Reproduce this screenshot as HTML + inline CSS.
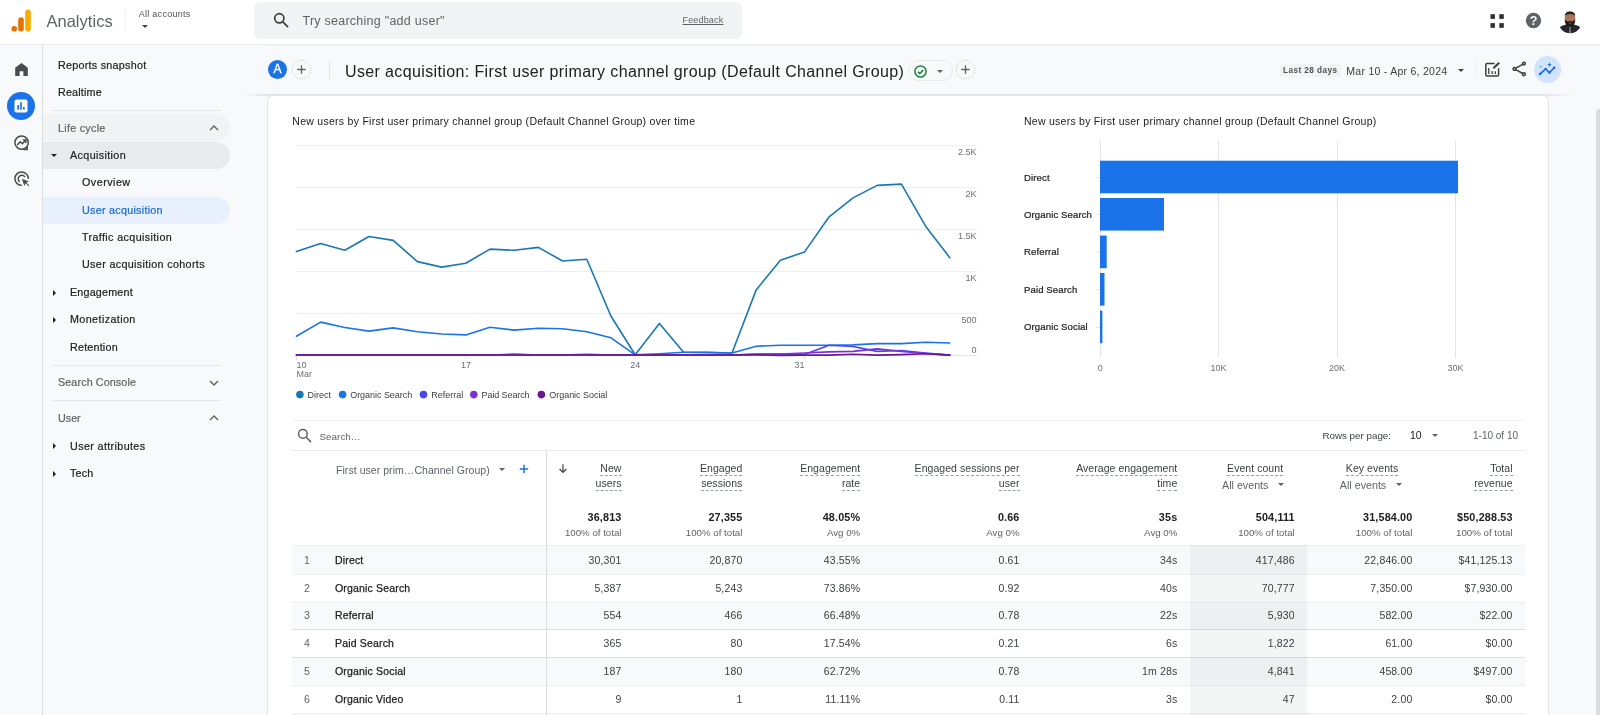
<!DOCTYPE html>
<html lang="en">
<head>
<meta charset="utf-8">
<title>Analytics - User acquisition</title>
<style>
*{box-sizing:border-box;margin:0;padding:0}
html,body{width:1600px;height:715px;overflow:hidden}
body{background:#f8f9fa;font-family:"Liberation Sans",sans-serif;color:#202124;position:relative;font-size:11px}
#root{position:absolute;left:0;top:0;width:1600px;height:715px;overflow:hidden;will-change:transform}
.abs{position:absolute;white-space:nowrap}
#topbar{position:absolute;left:0;top:0;width:1600px;height:44px;background:#fff;box-shadow:0 1px 0 #ebedf0,0 2px 1px rgba(235,237,240,.5)}
#rail{position:absolute;left:0;top:45px;width:43px;height:670px;border-right:1px solid #dadce0;background:#f8f9fa}
#nav{position:absolute;left:43px;top:45px;width:225px;height:670px;background:#f8f9fa}
.nv{position:absolute;white-space:nowrap;font-size:10.75px;color:#202124;letter-spacing:.1px;line-height:14px;-webkit-text-stroke:.2px currentColor}
.nvh{color:#5f6368}
.pill{position:absolute;left:0;width:187px;height:27px;border-radius:0 14px 14px 0}
.hr{position:absolute;left:9px;width:169px;height:1px;background:#e3e5e8}
.tri{position:absolute;width:0;height:0}
#search{position:absolute;left:254px;top:2px;width:488px;height:37px;border-radius:6px;background:#f1f3f4}
#card{position:absolute;left:268px;top:96px;width:1280px;height:640px;background:#fff;border-radius:5px;box-shadow:0 0 0 1px #e1e3e6}
.ln{position:absolute;height:1px;background:#e8eaed}
.rw{position:absolute;left:292px;width:1233px}
.th{font-size:10.5px;line-height:14px;color:#3c4043;letter-spacing:.05px}
.th span{border-bottom:1px dashed #9aa0a6;display:inline-block;line-height:13px}
.r{text-align:right}
.tt{font-size:10.8px;line-height:13px;font-weight:bold;color:#202124;letter-spacing:.15px}
.ts{font-size:9.7px;line-height:12px;color:#5f6368}
.td{font-size:10.5px;line-height:13px;color:#3c4043;letter-spacing:.15px}
.nm{color:#202124;letter-spacing:.17px;-webkit-text-stroke:.25px #202124}
</style>
</head>
<body>
<div id="root">

<!-- ============ TOP BAR ============ -->
<div id="topbar">
  <svg class="abs" style="left:11px;top:9px" width="21" height="23" viewBox="0 0 21 23">
    <rect x="14.2" y="0.5" width="5.6" height="22" rx="2.8" fill="#f9ab00"/>
    <rect x="7.2" y="8.2" width="5.6" height="14.3" rx="2.8" fill="#e37400"/>
    <circle cx="3.2" cy="19.7" r="2.8" fill="#e37400"/>
  </svg>
  <div class="abs" style="left:46.4px;top:11px;font-size:16.5px;color:#5f6368;letter-spacing:.04px;line-height:20px">Analytics</div>
  <div class="abs" style="left:125px;top:9px;width:1px;height:24px;background:#f1f3f4"></div>
  <div class="abs" style="left:138.7px;top:8.7px;font-size:9px;color:#4d5156;letter-spacing:.28px;line-height:11px">All accounts</div>
  <div class="tri" style="left:142px;top:25px;border-left:3.5px solid transparent;border-right:3.5px solid transparent;border-top:3.5px solid #3c4043"></div>

  <div id="search">
    <svg class="abs" style="left:19px;top:10.3px" width="16" height="16" viewBox="0 0 16 16" fill="none" stroke="#3c4043" stroke-width="1.7"><circle cx="6.3" cy="6.3" r="4.6"/><path d="M9.8 9.8 L14.6 14.6" stroke-linecap="round"/></svg>
    <div class="abs" style="left:48.5px;top:11.7px;font-size:12.5px;color:#5f6368;line-height:15px;letter-spacing:.25px">Try searching "add user"</div>
    <div class="abs" style="left:428.5px;top:12.8px;font-size:9px;color:#5f6368;line-height:11px;text-decoration:underline;letter-spacing:.17px">Feedback</div>
  </div>

  <!-- apps grid -->
  <svg class="abs" style="left:1488.9px;top:12.8px" width="16" height="16" viewBox="0 0 16 16" fill="#303134"><rect x="1.45" y="1.2" width="4.5" height="4.7"/><rect x="10.3" y="1.2" width="4.5" height="4.7"/><rect x="1.45" y="10.1" width="4.5" height="4.7"/><rect x="10.3" y="10.1" width="4.5" height="4.7"/></svg>
  <!-- help -->
  <svg class="abs" style="left:1524.5px;top:11.8px" width="17" height="17" viewBox="0 0 17 17"><circle cx="8.5" cy="8.5" r="7.7" fill="#5f6368"/><text x="8.5" y="13" font-family="Liberation Sans, sans-serif" font-weight="bold" font-size="12.5" fill="#fff" text-anchor="middle">?</text></svg>
  <!-- avatar -->
  <svg class="abs" style="left:1557.6px;top:9.5px" width="24" height="24" viewBox="0 0 24 24">
    <defs><clipPath id="avc"><circle cx="12" cy="12" r="11.3"/></clipPath></defs>
    <g clip-path="url(#avc)">
      <rect width="24" height="24" fill="#ffffff"/>
      <path d="M0 24 L0 18.5 Q3 15.4 8 14.6 L16 14.6 Q21 15.4 24 18.5 L24 24 Z" fill="#24262a"/>
      <path d="M11.6 16.5 L12.4 16.5 L12.8 24 L11.2 24 Z" fill="#9a9da3"/>
      <ellipse cx="12" cy="8.8" rx="5.3" ry="7.2" fill="#a8755a"/>
      <path d="M6.7 9.6 Q6.9 16.4 12 16.6 Q17.1 16.4 17.3 9.6 Q15.6 11.6 14.2 11.4 Q12 10.6 9.8 11.4 Q8.4 11.6 6.7 9.6Z" fill="#1d1715"/>
      <path d="M6.7 6.6 Q6.8 1.5 12 1.5 Q17.2 1.5 17.3 6.6 Q16.4 4 12 3.9 Q7.6 4 6.7 6.6Z" fill="#2a201d"/>
      <path d="M10.6 12.9 Q12 13.5 13.4 12.9" stroke="#b07a6a" stroke-width=".7" fill="none"/>
    </g>
  </svg>
</div>

<!-- ============ LEFT ICON RAIL ============ -->
<div id="rail">
  <!-- home -->
  <svg class="abs" style="left:14.3px;top:17px" width="15" height="15" viewBox="0 0 15 15"><path d="M7.5 1 L1.2 5.8 V14 H5.6 V9.3 H9.4 V14 H13.8 V5.8 Z" fill="#474a4e"/></svg>
  <!-- reports (active) -->
  <div class="abs" style="left:7px;top:47px;width:28px;height:28px;border-radius:50%;background:#1a73e8"></div>
  <svg class="abs" style="left:14px;top:54px" width="14" height="14" viewBox="0 0 14 14"><rect x="0.5" y="0.5" width="13" height="13" rx="2" fill="#fff"/><rect x="3.3" y="6" width="1.7" height="4.6" fill="#1a73e8"/><rect x="6.15" y="3.2" width="1.7" height="7.4" fill="#1a73e8"/><rect x="9" y="8" width="1.7" height="2.6" fill="#1a73e8"/></svg>
  <!-- explore -->
  <svg class="abs" style="left:13px;top:89px" width="18" height="18" viewBox="0 0 18 18" fill="none" stroke="#474a4e" stroke-width="1.5"><circle cx="8.6" cy="8.6" r="6.7"/><path d="M4.6 10.6 L7.3 7.7 L9.3 9.7 L12.6 6.2" stroke-linejoin="round" stroke-linecap="round"/><path d="M10.4 5.9 H12.9 V8.4" stroke-linejoin="round" stroke-linecap="round"/><path d="M14.2 12.4 V15.6 H11" stroke-linecap="round"/></svg>
  <!-- advertising -->
  <svg class="abs" style="left:12.6px;top:125.3px" width="18" height="18" viewBox="0 0 18 18" fill="none" stroke="#474a4e" stroke-width="1.5"><path d="M8.2 15.3 A6.7 6.7 0 1 1 15.3 8.2" stroke-linecap="round"/><path d="M6.2 11.4 A3.4 3.4 0 1 1 11.6 6.4" stroke-linecap="round"/><path d="M8.8 8.8 L16 11.4 L13.3 12.6 L16.3 15.6 L15.6 16.3 L12.6 13.3 L11.4 16 Z" fill="#474a4e" stroke="none"/></svg>
</div>

<!-- ============ LEFT NAV ============ -->
<div id="nav">
  <div class="nv" style="left:15px;top:12.5px;letter-spacing:0.26px">Reports snapshot</div>
  <div class="nv" style="left:15px;top:40.1px;letter-spacing:0.17px">Realtime</div>
  <div class="hr" style="top:65px"></div>
  <div class="pill" style="top:69px;background:#f1f3f4"></div>
  <div class="nv nvh" style="left:15px;top:76px;letter-spacing:0.28px">Life cycle</div>
  <svg class="abs" style="left:166.2px;top:79px" width="10" height="8" viewBox="0 0 10 8" fill="none" stroke="#5f6368" stroke-width="1.4"><path d="M1 6 L5 2 L9 6"/></svg>
  <div class="pill" style="top:97px;background:#e8eaed"></div>
  <div class="tri" style="left:8px;top:109px;border-left:3px solid transparent;border-right:3px solid transparent;border-top:3px solid #202124"></div>
  <div class="nv" style="left:27px;top:103.1px;letter-spacing:0.37px">Acquisition</div>
  <div class="nv" style="left:39px;top:130.1px;letter-spacing:0.47px">Overview</div>
  <div class="pill" style="top:152px;background:#e8f0fe"></div>
  <div class="nv" style="left:39px;top:157.85px;color:#1967d2;letter-spacing:0.27px">User acquisition</div>
  <div class="nv" style="left:39px;top:185.1px;letter-spacing:0.37px">Traffic acquisition</div>
  <div class="nv" style="left:39px;top:212.35px;letter-spacing:0.34px">User acquisition cohorts</div>
  <div class="tri" style="left:9.7px;top:244.5px;border-top:3px solid transparent;border-bottom:3px solid transparent;border-left:3px solid #202124"></div>
  <div class="nv" style="left:27px;top:240.1px;letter-spacing:0.19px">Engagement</div>
  <div class="tri" style="left:9.7px;top:271.5px;border-top:3px solid transparent;border-bottom:3px solid transparent;border-left:3px solid #202124"></div>
  <div class="nv" style="left:27px;top:267.35px;letter-spacing:0.40px">Monetization</div>
  <div class="nv" style="left:27px;top:294.9px;letter-spacing:0.20px">Retention</div>
  <div class="hr" style="top:320px"></div>
  <div class="nv nvh" style="left:15px;top:330.1px;letter-spacing:0.11px">Search Console</div>
  <svg class="abs" style="left:166px;top:334px" width="10" height="8" viewBox="0 0 10 8" fill="none" stroke="#5f6368" stroke-width="1.4"><path d="M1 2 L5 6 L9 2"/></svg>
  <div class="hr" style="top:355px"></div>
  <div class="nv nvh" style="left:15px;top:365.9px;letter-spacing:-0.00px">User</div>
  <svg class="abs" style="left:166px;top:369px" width="10" height="8" viewBox="0 0 10 8" fill="none" stroke="#5f6368" stroke-width="1.4"><path d="M1 6 L5 2 L9 6"/></svg>
  <div class="tri" style="left:9.7px;top:397.5px;border-top:3px solid transparent;border-bottom:3px solid transparent;border-left:3px solid #202124"></div>
  <div class="nv" style="left:27px;top:393.6px;letter-spacing:0.37px">User attributes</div>
  <div class="tri" style="left:9.7px;top:425.5px;border-top:3px solid transparent;border-bottom:3px solid transparent;border-left:3px solid #202124"></div>
  <div class="nv" style="left:27px;top:420.6px;letter-spacing:0.17px">Tech</div>
</div>

<div class="abs" style="left:1596px;top:109px;width:8px;height:620px;border-radius:4px;background:#dadce0"></div>

<!-- ============ HEADER ROW ============ -->
<div id="hdr">
  <div class="abs" style="left:268px;top:60px;width:19px;height:19px;border-radius:50%;background:#1a73e8;color:#fff;font-size:12px;-webkit-text-stroke:.35px #fff;text-align:center;line-height:19px">A</div>
  <svg class="abs" style="left:291px;top:59px" width="21" height="21" viewBox="0 0 21 21" fill="none"><circle cx="10.5" cy="10.5" r="9.2" stroke="#bdc1c6" stroke-width=".8" stroke-dasharray="1.3 1.3"/><path d="M10.5 6.3 V14.7 M6.3 10.5 H14.7" stroke="#5f6368" stroke-width="1.3"/></svg>
  <div class="abs" style="left:329px;top:61px;width:1px;height:18px;background:#e3e5e8"></div>
  <div class="abs" id="title" style="left:345px;top:62px;font-size:16px;line-height:20px;color:#202124;letter-spacing:.37px">User acquisition: First user primary channel group (Default Channel Group)</div>
  <div class="abs" style="left:908px;top:60px;width:45px;height:21px;border:1px solid #e6e8eb;border-radius:11px"></div>
  <svg class="abs" style="left:913px;top:64px" width="15" height="15" viewBox="0 0 15 15" fill="none" stroke="#188038" stroke-width="1.5"><circle cx="7.5" cy="7.5" r="5.6"/><path d="M4.9 7.7 L6.8 9.6 L10.3 5.9" stroke-linejoin="round"/></svg>
  <div class="tri" style="left:937px;top:70px;border-left:3.5px solid transparent;border-right:3.5px solid transparent;border-top:3.5px solid #5f6368"></div>
  <svg class="abs" style="left:955px;top:59px" width="21" height="21" viewBox="0 0 21 21" fill="none"><circle cx="10.5" cy="10.5" r="9.2" stroke="#bdc1c6" stroke-width=".8" stroke-dasharray="1.3 1.3"/><path d="M10.5 6.3 V14.7 M6.3 10.5 H14.7" stroke="#5f6368" stroke-width="1.3"/></svg>

  <div class="abs" style="left:1280px;top:64px;width:61px;height:13px;background:#f1f3f4;border-radius:2px"></div>
  <div class="abs" style="left:1283px;top:65px;font-size:8.2px;line-height:11px;font-weight:bold;color:#4d5156;letter-spacing:.45px">Last 28 days</div>
  <div class="abs" style="left:1346.3px;top:63.6px;font-size:10.5px;line-height:14px;color:#3c4043;letter-spacing:.27px">Mar 10 - Apr 6, 2024</div>
  <div class="tri" style="left:1458px;top:69px;border-left:3px solid transparent;border-right:3px solid transparent;border-top:3.5px solid #3c4043"></div>
  <div class="abs" style="left:1475px;top:60px;width:1px;height:19px;background:#eceef0"></div>
  <!-- edit comparisons icon -->
  <svg class="abs" style="left:1483px;top:60px" width="18" height="18" viewBox="0 0 18 18" fill="none" stroke="#3c4043" stroke-width="1.5"><path d="M11.6 3.6 H4.1 Q2.8 3.6 2.8 4.9 V14.8 Q2.8 16.1 4.1 16.1 H14.3 Q15.6 16.1 15.6 14.8 V8.2"/><path d="M5.75 8.1 V13.9 M9.2 11 V13.9 M12.3 11.2 V13.9" stroke-width="1.3"/><path d="M10.3 8.3 L16.2 2.7" stroke-width="2.1"/></svg>
  <!-- share -->
  <svg class="abs" style="left:1511px;top:59.9px" width="18" height="18" viewBox="0 0 18 18" fill="none" stroke="#3c4043" stroke-width="1.55"><circle cx="12.9" cy="3.6" r="1.4"/><circle cx="12.9" cy="14.2" r="1.4"/><circle cx="3.5" cy="8.9" r="1.4"/><path d="M4.8 8.2 L11.7 4.3 M4.8 9.6 L11.7 13.5"/></svg>
  <!-- insights -->
  <div class="abs" style="left:1534px;top:56px;width:27px;height:27px;border-radius:50%;background:#d2e3fc"></div>
  <svg class="abs" style="left:1538px;top:60px" width="19" height="19" viewBox="0 0 19 19" fill="none" stroke="#1a68e5" stroke-width="1.6" stroke-linejoin="round" stroke-linecap="round"><path d="M2 14.1 L7.6 8.8 L11.4 12.8 L16.1 7.8"/><g fill="#1a68e5" stroke="none"><circle cx="2" cy="14.1" r="1.25"/><circle cx="7.6" cy="8.8" r="1.1"/><circle cx="11.4" cy="12.8" r="1.1"/><circle cx="16.1" cy="7.8" r="1.25"/><path d="M11.4 2.4 L12.05 4.05 L13.7 4.7 L12.05 5.35 L11.4 7 L10.75 5.35 L9.1 4.7 L10.75 4.05 Z"/><path d="M1.5 6.2 H3.8 L2.65 7.5 Z"/></g></svg>
</div>

<!-- ============ CARD ============ -->
<div class="abs" style="left:244px;top:94px;width:1330px;height:2px;background:linear-gradient(90deg,rgba(218,220,224,0),rgba(218,220,224,.9) 2%,rgba(218,220,224,.9) 97%,rgba(218,220,224,0))"></div>
<div id="card"></div>
<svg id="charts" class="abs" style="left:0;top:0" width="1600" height="715" viewBox="0 0 1600 715" font-family="Liberation Sans, sans-serif">
  <!-- line chart -->
  <text x="292.3" y="125" font-size="10.5" fill="#202124" letter-spacing=".277">New users by First user primary channel group (Default Channel Group) over time</text>
  <g stroke="#eceef0" stroke-width="1">
    <path d="M296 145.5 H977 M296 187.5 H977 M296 229.5 H977 M296 271.5 H977 M296 313.5 H977"/>
  </g>
  <path d="M296 355.5 H977" stroke="#e3e5e8" stroke-width="1"/>
  <path d="M296.5 356 V360 M465.8 356 V359 M635.2 356 V359 M804.6 356 V359" stroke="#e0e0e0" stroke-width="1"/>
  <g font-size="9" fill="#6b6f74" text-anchor="end">
    <text x="976.5" y="155">2.5K</text><text x="976.5" y="197">2K</text><text x="976.5" y="238.7">1.5K</text><text x="976.5" y="281">1K</text><text x="976.5" y="323">500</text><text x="976.5" y="353">0</text>
  </g>
  <g font-size="9" fill="#6b6f74">
    <text x="296.5" y="368">10</text><text x="296.5" y="377">Mar</text>
    <text x="466" y="368" text-anchor="middle">17</text><text x="635.2" y="368" text-anchor="middle">24</text><text x="799.6" y="368" text-anchor="middle">31</text>
  </g>
  <polyline points="296.4,251.6 320.6,243.6 344.8,250.3 369.0,236.5 393.2,240.4 417.4,261.6 441.6,267.1 465.8,263.2 490.0,249.1 514.2,250.3 538.4,247.4 562.6,261.0 586.8,259.3 611.0,316.3 635.2,354.8 659.4,323.4 683.6,352.3 707.8,352.6 732.0,353.0 756.2,289.9 780.4,260.3 804.6,251.9 828.8,217.2 853.0,197.9 877.2,185.4 901.4,184.1 925.6,226.2 949.8,257.7" fill="none" stroke="#1a77b4" stroke-width="1.6" stroke-linejoin="round" stroke-linecap="round"/>
<polyline points="296.4,336.2 320.6,322.1 344.8,327.5 369.0,331.1 393.2,327.9 417.4,331.7 441.6,334.0 465.8,334.9 490.0,327.2 514.2,330.1 538.4,328.2 562.6,328.8 586.8,331.7 611.0,337.8 635.2,354.8 659.4,353.8 683.6,352.3 707.8,352.3 732.0,353.0 756.2,346.2 780.4,345.2 804.6,345.2 828.8,345.2 853.0,344.9 877.2,343.6 901.4,343.6 925.6,342.3 949.8,343.0" fill="none" stroke="#1a73e8" stroke-width="1.6" stroke-linejoin="round" stroke-linecap="round"/>
<polyline points="296.4,355.0 320.6,355.0 344.8,355.0 369.0,355.0 393.2,355.0 417.4,355.0 441.6,355.0 465.8,355.0 490.0,355.0 514.2,355.0 538.4,355.0 562.6,355.0 586.8,355.0 611.0,355.0 635.2,355.0 659.4,355.0 683.6,355.0 707.8,355.0 732.0,355.0 756.2,354.3 780.4,354.1 804.6,354.6 828.8,345.2 853.0,346.5 877.2,351.4 901.4,350.5 925.6,353.0 949.8,355.1" fill="none" stroke="#4b46f0" stroke-width="1.6" stroke-linejoin="round" stroke-linecap="round"/>
<polyline points="296.4,355.0 320.6,355.0 344.8,355.0 369.0,355.0 393.2,355.0 417.4,355.0 441.6,355.0 465.8,355.0 490.0,355.0 514.2,354.1 538.4,355.0 562.6,355.0 586.8,354.3 611.0,355.0 635.2,355.0 659.4,355.0 683.6,355.0 707.8,355.0 732.0,355.0 756.2,354.1 780.4,354.1 804.6,353.0 828.8,351.9 853.0,351.4 877.2,348.9 901.4,351.4 925.6,353.5 949.8,355.1" fill="none" stroke="#7b31d3" stroke-width="1.6" stroke-linejoin="round" stroke-linecap="round"/>
<polyline points="296.4,355.0 320.6,355.0 344.8,355.0 369.0,355.0 393.2,355.0 417.4,355.0 441.6,355.0 465.8,355.0 490.0,355.0 514.2,355.0 538.4,355.0 562.6,355.0 586.8,355.0 611.0,355.0 635.2,355.0 659.4,355.0 683.6,355.0 707.8,355.0 732.0,355.0 756.2,354.9 780.4,355.5 804.6,355.1 828.8,355.1 853.0,354.3 877.2,355.1 901.4,354.6 925.6,353.8 949.8,355.1" fill="none" stroke="#6a1496" stroke-width="1.6" stroke-linejoin="round" stroke-linecap="round"/>

  <g>
    <circle cx="299.9" cy="394.6" r="3.8" fill="#1a77b4"/><circle cx="342.6" cy="394.6" r="3.8" fill="#1a73e8"/><circle cx="423.5" cy="394.6" r="3.8" fill="#4b46f0"/><circle cx="473.8" cy="394.6" r="3.8" fill="#7b31d3"/><circle cx="541.4" cy="394.6" r="3.8" fill="#6a1496"/>
  </g>
  <g font-size="9" fill="#3c4043">
    <text x="307.5" y="397.8">Direct</text><text x="350.2" y="397.8" letter-spacing="-.04">Organic Search</text><text x="431.3" y="397.8">Referral</text><text x="481.6" y="397.8" letter-spacing="-.1">Paid Search</text><text x="549.3" y="397.8" letter-spacing="-.04">Organic Social</text>
  </g>

  <!-- bar chart -->
  <text x="1024" y="125" font-size="10.5" fill="#202124" letter-spacing=".254">New users by First user primary channel group (Default Channel Group)</text>
  <path d="M1100.5 141 V358 M1218.5 141 V358 M1337.5 141 V358 M1455.5 141 V358" stroke="#e3e5e8" stroke-width="1"/>
  <path d="M1096 177.5 H1100 M1096 214.5 H1100 M1096 252.5 H1100 M1096 289.5 H1100 M1096 327.5 H1100" stroke="#e3e5e8" stroke-width="1"/>
  <g fill="#1a73e8">
    <rect x="1100" y="160.7" width="358" height="32.6"/><rect x="1100" y="198" width="64" height="32.6"/><rect x="1100" y="235.6" width="6.7" height="32.6"/><rect x="1100" y="273" width="4.5" height="32.6"/><rect x="1100" y="310.6" width="2.4" height="32.6"/>
  </g>
  <g font-size="9.6" fill="#202124" letter-spacing=".1" stroke="#202124" stroke-width=".2">
    <text x="1024" y="180.7">Direct</text><text x="1024" y="218">Organic Search</text><text x="1024" y="255.3">Referral</text><text x="1024" y="292.8">Paid Search</text><text x="1024" y="330.2">Organic Social</text>
  </g>
  <g font-size="9" fill="#6b6f74" text-anchor="middle">
    <text x="1100.2" y="371">0</text><text x="1218.6" y="371">10K</text><text x="1337" y="371">20K</text><text x="1455.4" y="371">30K</text>
  </g>
</svg>
<div id="tbl">
<div class="ln" style="left:292px;top:419.5px;width:1233px;background:#f1f3f4"></div>
<div class="ln" style="left:292px;top:450px;width:1233px"></div>
<svg class="abs" style="left:297px;top:428px" width="15" height="15" viewBox="0 0 15 15" fill="none" stroke="#5f6368" stroke-width="1.5"><circle cx="5.9" cy="5.9" r="4.3"/><path d="M9.2 9.2 L13.6 13.6" stroke-linecap="round"/></svg>
<div class="abs" style="left:319.5px;top:429.9px;font-size:9.8px;line-height:13px;color:#5f6368;letter-spacing:.05px">Search…</div>
<div class="abs" style="left:1322.4px;top:429px;font-size:9.8px;line-height:13px;color:#3c4043">Rows per page:</div>
<div class="abs" style="left:1410px;top:429px;font-size:10.5px;line-height:13px;color:#202124">10</div>
<div class="tri" style="left:1432px;top:434px;border-left:3px solid transparent;border-right:3px solid transparent;border-top:3.5px solid #5f6368"></div>
<div class="abs" style="left:1473px;top:429px;font-size:10px;line-height:13px;color:#5f6368">1-10 of 10</div>
<div class="rw" style="top:545.0px;height:29.0px;background:#f8f9fa;border-top:1px solid #eceef0"></div>
<div class="rw" style="top:574.0px;height:28.0px;background:#fff;border-top:1px solid #eceef0"></div>
<div class="rw" style="top:602.0px;height:27.0px;background:#f8f9fa;border-top:1px solid #eceef0"></div>
<div class="rw" style="top:629.0px;height:28.0px;background:#fff;border-top:1px solid #dcdfe3"></div>
<div class="rw" style="top:657.0px;height:28.0px;background:#f8f9fa;border-top:1px solid #dcdfe3"></div>
<div class="rw" style="top:685.0px;height:28.0px;background:#fff;border-top:1px solid #eceef0"></div>
<div class="rw" style="top:713.0px;height:28.0px;background:#f8f9fa;border-top:1px solid #eceef0"></div>
<div class="abs" style="left:1190px;top:545px;width:117px;height:175px;background:rgba(60,64,67,.055)"></div>
<div class="abs" style="left:546px;top:451px;width:1px;height:270px;background:#dadce0"></div>
<div class="abs th" style="left:336px;top:462.6px;color:#5f6368">First user prim…Channel Group)</div>
<div class="tri" style="left:499px;top:468px;border-left:3px solid transparent;border-right:3px solid transparent;border-top:3.5px solid #5f6368"></div>
<svg class="abs" style="left:519px;top:464px" width="10" height="10" viewBox="0 0 10 10"><path d="M5 .8 V9.2 M.8 5 H9.2" stroke="#1a73e8" stroke-width="1.5"/></svg>
<svg class="abs" style="left:558px;top:463px" width="10" height="11" viewBox="0 0 10 11" fill="none" stroke="#3c4043" stroke-width="1.2"><path d="M5 1.2 V9.2 M1.6 6 L5 9.4 L8.4 6"/></svg>
<div class="abs th r" style="right:978.5px;top:461px"><span>New</span></div>
<div class="abs th r" style="right:978.5px;top:476px"><span>users</span></div>
<div class="abs th r" style="right:857.6px;top:461px"><span>Engaged</span></div>
<div class="abs th r" style="right:857.6px;top:476px"><span>sessions</span></div>
<div class="abs th r" style="right:739.8px;top:461px"><span>Engagement</span></div>
<div class="abs th r" style="right:739.8px;top:476px"><span>rate</span></div>
<div class="abs th r" style="right:580.5px;top:461px"><span>Engaged sessions per</span></div>
<div class="abs th r" style="right:580.5px;top:476px"><span>user</span></div>
<div class="abs th r" style="right:422.7px;top:461px"><span>Average engagement</span></div>
<div class="abs th r" style="right:422.7px;top:476px"><span>time</span></div>
<div class="abs th r" style="right:87.4px;top:461px"><span>Total</span></div>
<div class="abs th r" style="right:87.4px;top:476px"><span>revenue</span></div>
<div class="abs th r" style="right:316.9px;top:461px"><span>Event count</span></div>
<div class="abs" style="right:331.6px;top:478.5px;font-size:10.7px;line-height:13px;color:#5f6368">All events</div>
<div class="tri" style="left:1278.4px;top:483px;border-left:3px solid transparent;border-right:3px solid transparent;border-top:3.5px solid #5f6368"></div>
<div class="abs th r" style="right:201.7px;top:461px"><span>Key events</span></div>
<div class="abs" style="right:213.8px;top:478.5px;font-size:10.7px;line-height:13px;color:#5f6368">All events</div>
<div class="tri" style="left:1396.2px;top:483px;border-left:3px solid transparent;border-right:3px solid transparent;border-top:3.5px solid #5f6368"></div>
<div class="abs tt r" style="right:978.5px;top:510.7px">36,813</div>
<div class="abs ts r" style="right:978.5px;top:526.8px">100% of total</div>
<div class="abs tt r" style="right:857.6px;top:510.7px">27,355</div>
<div class="abs ts r" style="right:857.6px;top:526.8px">100% of total</div>
<div class="abs tt r" style="right:739.8px;top:510.7px">48.05%</div>
<div class="abs ts r" style="right:739.8px;top:526.8px">Avg 0%</div>
<div class="abs tt r" style="right:580.5px;top:510.7px">0.66</div>
<div class="abs ts r" style="right:580.5px;top:526.8px">Avg 0%</div>
<div class="abs tt r" style="right:422.7px;top:510.7px">35s</div>
<div class="abs ts r" style="right:422.7px;top:526.8px">Avg 0%</div>
<div class="abs tt r" style="right:305.3px;top:510.7px">504,111</div>
<div class="abs ts r" style="right:305.3px;top:526.8px">100% of total</div>
<div class="abs tt r" style="right:187.6px;top:510.7px">31,584.00</div>
<div class="abs ts r" style="right:187.6px;top:526.8px">100% of total</div>
<div class="abs tt r" style="right:87.4px;top:510.7px">$50,288.53</div>
<div class="abs ts r" style="right:87.4px;top:526.8px">100% of total</div>
<div class="abs td" style="left:304px;top:554.0px;color:#5f6368">1</div>
<div class="abs td nm" style="left:335px;top:554.0px">Direct</div>
<div class="abs td r" style="right:978.5px;top:554.0px">30,301</div>
<div class="abs td r" style="right:857.6px;top:554.0px">20,870</div>
<div class="abs td r" style="right:739.8px;top:554.0px">43.55%</div>
<div class="abs td r" style="right:580.5px;top:554.0px">0.61</div>
<div class="abs td r" style="right:422.7px;top:554.0px">34s</div>
<div class="abs td r" style="right:305.3px;top:554.0px">417,486</div>
<div class="abs td r" style="right:187.6px;top:554.0px">22,846.00</div>
<div class="abs td r" style="right:87.4px;top:554.0px">$41,125.13</div>
<div class="abs td" style="left:304px;top:582.0px;color:#5f6368">2</div>
<div class="abs td nm" style="left:335px;top:582.0px">Organic Search</div>
<div class="abs td r" style="right:978.5px;top:582.0px">5,387</div>
<div class="abs td r" style="right:857.6px;top:582.0px">5,243</div>
<div class="abs td r" style="right:739.8px;top:582.0px">73.86%</div>
<div class="abs td r" style="right:580.5px;top:582.0px">0.92</div>
<div class="abs td r" style="right:422.7px;top:582.0px">40s</div>
<div class="abs td r" style="right:305.3px;top:582.0px">70,777</div>
<div class="abs td r" style="right:187.6px;top:582.0px">7,350.00</div>
<div class="abs td r" style="right:87.4px;top:582.0px">$7,930.00</div>
<div class="abs td" style="left:304px;top:609.0px;color:#5f6368">3</div>
<div class="abs td nm" style="left:335px;top:609.0px">Referral</div>
<div class="abs td r" style="right:978.5px;top:609.0px">554</div>
<div class="abs td r" style="right:857.6px;top:609.0px">466</div>
<div class="abs td r" style="right:739.8px;top:609.0px">66.48%</div>
<div class="abs td r" style="right:580.5px;top:609.0px">0.78</div>
<div class="abs td r" style="right:422.7px;top:609.0px">22s</div>
<div class="abs td r" style="right:305.3px;top:609.0px">5,930</div>
<div class="abs td r" style="right:187.6px;top:609.0px">582.00</div>
<div class="abs td r" style="right:87.4px;top:609.0px">$22.00</div>
<div class="abs td" style="left:304px;top:637.0px;color:#5f6368">4</div>
<div class="abs td nm" style="left:335px;top:637.0px">Paid Search</div>
<div class="abs td r" style="right:978.5px;top:637.0px">365</div>
<div class="abs td r" style="right:857.6px;top:637.0px">80</div>
<div class="abs td r" style="right:739.8px;top:637.0px">17.54%</div>
<div class="abs td r" style="right:580.5px;top:637.0px">0.21</div>
<div class="abs td r" style="right:422.7px;top:637.0px">6s</div>
<div class="abs td r" style="right:305.3px;top:637.0px">1,822</div>
<div class="abs td r" style="right:187.6px;top:637.0px">61.00</div>
<div class="abs td r" style="right:87.4px;top:637.0px">$0.00</div>
<div class="abs td" style="left:304px;top:665.0px;color:#5f6368">5</div>
<div class="abs td nm" style="left:335px;top:665.0px">Organic Social</div>
<div class="abs td r" style="right:978.5px;top:665.0px">187</div>
<div class="abs td r" style="right:857.6px;top:665.0px">180</div>
<div class="abs td r" style="right:739.8px;top:665.0px">62.72%</div>
<div class="abs td r" style="right:580.5px;top:665.0px">0.78</div>
<div class="abs td r" style="right:422.7px;top:665.0px">1m 28s</div>
<div class="abs td r" style="right:305.3px;top:665.0px">4,841</div>
<div class="abs td r" style="right:187.6px;top:665.0px">458.00</div>
<div class="abs td r" style="right:87.4px;top:665.0px">$497.00</div>
<div class="abs td" style="left:304px;top:693.0px;color:#5f6368">6</div>
<div class="abs td nm" style="left:335px;top:693.0px">Organic Video</div>
<div class="abs td r" style="right:978.5px;top:693.0px">9</div>
<div class="abs td r" style="right:857.6px;top:693.0px">1</div>
<div class="abs td r" style="right:739.8px;top:693.0px">11.11%</div>
<div class="abs td r" style="right:580.5px;top:693.0px">0.11</div>
<div class="abs td r" style="right:422.7px;top:693.0px">3s</div>
<div class="abs td r" style="right:305.3px;top:693.0px">47</div>
<div class="abs td r" style="right:187.6px;top:693.0px">2.00</div>
<div class="abs td r" style="right:87.4px;top:693.0px">$0.00</div>
<div class="abs td" style="left:304px;top:721.0px;color:#5f6368">7</div>
<div class="abs td nm" style="left:335px;top:721.0px">Unassigned</div>
<div class="abs td r" style="right:978.5px;top:721.0px">6</div>
<div class="abs td r" style="right:857.6px;top:721.0px">3</div>
<div class="abs td r" style="right:739.8px;top:721.0px">25%</div>
<div class="abs td r" style="right:580.5px;top:721.0px">0.5</div>
<div class="abs td r" style="right:422.7px;top:721.0px">12s</div>
<div class="abs td r" style="right:305.3px;top:721.0px">52</div>
<div class="abs td r" style="right:187.6px;top:721.0px">1.00</div>
<div class="abs td r" style="right:87.4px;top:721.0px">$0.00</div>
</div>

</div>
</body>
</html>
